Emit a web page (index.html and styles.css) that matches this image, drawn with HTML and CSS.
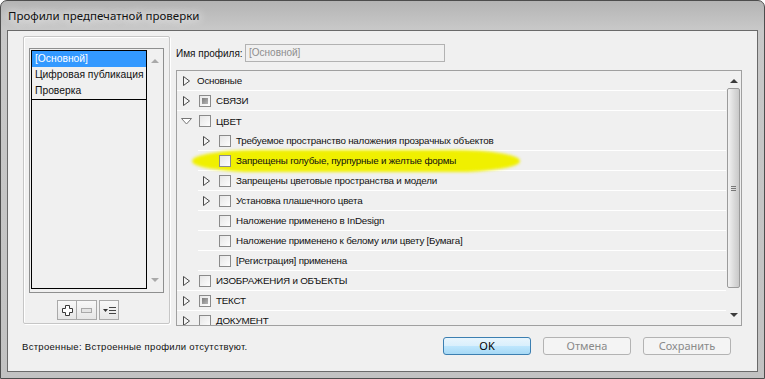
FILE: index.html
```html
<!DOCTYPE html>
<html>
  <head>
    <meta charset="utf-8" />
    <title>Профили предпечатной проверки</title>
    <link rel="stylesheet" href="styles.css">
  </head>
  <body>
    <div class="window">
      <div class="titlebar">
        <span class="title">Профили предпечатной проверки</span>
      </div>
      <div class="client">
        <div class="main">
          <!-- profiles list -->
          <div class="group">
            <div class="listbox">
              <div class="list">
                <div class="item selected">[Основной]</div>
                <div class="item">Цифровая публикация</div>
                <div class="item last">Проверка</div>
              </div>
              <div class="vscroll off">
                <span class="arrow up"></span>
                <span class="arrow down"></span>
              </div>
            </div>
            <div class="list-tools">
              <div class="seg">
                <button class="tool">
                  <svg width="11" height="11" viewBox="0 0 11 11">
                    <path d="M3.5 0.5h4v3h3v4h-3v3h-4v-3h-3v-4h3z" fill="#fff" stroke="#3a3a3a" />
                  </svg>
                </button>
                <button class="tool">
                  <svg width="11" height="11" viewBox="0 0 11 11">
                    <rect x="0.5" y="3.5" width="10" height="4" fill="#e4e4e4" stroke="#a8a8a8" />
                  </svg>
                </button>
              </div>
              <button class="tool">
                <svg width="13" height="11" viewBox="0 0 13 11">
                  <path d="M0 4h5l-2.5 3z" fill="#333" />
                  <path d="M6 2.5h7M6 5.5h7M6 8.5h7" stroke="#444" stroke-width="1" />
                </svg>
              </button>
            </div>
          </div>

          <!-- profile details -->
          <div class="right">
            <div class="name-row">
              <span class="name-label">Имя профиля:</span>
              <div class="name-input">[Основной]</div>
            </div>
            <div class="tree">
              <div class="rows">
                <div class="row">
                  <span class="tw"><svg width="7" height="10" viewBox="0 0 7 10"><path d="M0.5 0.5L6.5 5L0.5 9.5z" fill="#f4f4f4" stroke="#4a4a4a" /></svg></span>
                  <span class="text tight">Основные</span>
                </div>
                <div class="row">
                  <span class="tw"><svg width="7" height="10" viewBox="0 0 7 10"><path d="M0.5 0.5L6.5 5L0.5 9.5z" fill="#f4f4f4" stroke="#4a4a4a" /></svg></span>
                  <span class="check mixed"></span>
                  <span class="text">СВЯЗИ</span>
                </div>
                <div class="row open">
                  <span class="tw"><svg width="11" height="7" viewBox="0 0 11 7"><path d="M0.5 0.5L10.5 0.5L5.5 6z" fill="#fff" stroke="#777" /></svg></span>
                  <span class="check"></span>
                  <span class="text">ЦВЕТ</span>
                </div>
                <div class="row child">
                  <span class="tw"><svg width="7" height="10" viewBox="0 0 7 10"><path d="M0.5 0.5L6.5 5L0.5 9.5z" fill="#f4f4f4" stroke="#4a4a4a" /></svg></span>
                  <span class="check"></span>
                  <span class="text">Требуемое пространство наложения прозрачных объектов</span>
                </div>
                <div class="row child marked">
                  <span class="tw"></span>
                  <span class="check"></span>
                  <span class="text">Запрещены голубые, пурпурные и желтые формы</span>
                </div>
                <div class="row child">
                  <span class="tw"><svg width="7" height="10" viewBox="0 0 7 10"><path d="M0.5 0.5L6.5 5L0.5 9.5z" fill="#f4f4f4" stroke="#4a4a4a" /></svg></span>
                  <span class="check"></span>
                  <span class="text">Запрещены цветовые пространства и модели</span>
                </div>
                <div class="row child">
                  <span class="tw"><svg width="7" height="10" viewBox="0 0 7 10"><path d="M0.5 0.5L6.5 5L0.5 9.5z" fill="#f4f4f4" stroke="#4a4a4a" /></svg></span>
                  <span class="check"></span>
                  <span class="text">Установка плашечного цвета</span>
                </div>
                <div class="row child">
                  <span class="tw"></span>
                  <span class="check"></span>
                  <span class="text">Наложение применено в InDesign</span>
                </div>
                <div class="row child">
                  <span class="tw"></span>
                  <span class="check"></span>
                  <span class="text">Наложение применено к белому или цвету [Бумага]</span>
                </div>
                <div class="row child">
                  <span class="tw"></span>
                  <span class="check"></span>
                  <span class="text">[Регистрация] применена</span>
                </div>
                <div class="row">
                  <span class="tw"><svg width="7" height="10" viewBox="0 0 7 10"><path d="M0.5 0.5L6.5 5L0.5 9.5z" fill="#f4f4f4" stroke="#4a4a4a" /></svg></span>
                  <span class="check"></span>
                  <span class="text">ИЗОБРАЖЕНИЯ и ОБЪЕКТЫ</span>
                </div>
                <div class="row">
                  <span class="tw"><svg width="7" height="10" viewBox="0 0 7 10"><path d="M0.5 0.5L6.5 5L0.5 9.5z" fill="#f4f4f4" stroke="#4a4a4a" /></svg></span>
                  <span class="check mixed"></span>
                  <span class="text">ТЕКСТ</span>
                </div>
                <div class="row">
                  <span class="tw"><svg width="7" height="10" viewBox="0 0 7 10"><path d="M0.5 0.5L6.5 5L0.5 9.5z" fill="#f4f4f4" stroke="#4a4a4a" /></svg></span>
                  <span class="check"></span>
                  <span class="text">ДОКУМЕНТ</span>
                </div>
              </div>
              <div class="vscroll">
                <span class="arrow up"></span>
                <div class="track">
                  <div class="thumb"><span class="grip"></span></div>
                </div>
                <span class="arrow down"></span>
              </div>
            </div>
          </div>
        </div>

        <div class="footer">
          <div class="status">Встроенные: Встроенные профили отсутствуют.</div>
          <div class="buttons">
            <button class="btn default">OK</button>
            <button class="btn" disabled>Отмена</button>
            <button class="btn" disabled>Сохранить</button>
          </div>
        </div>
      </div>
    </div>
  </body>
</html>
```

FILE: styles.css
```css
html,
body {
  margin: 0;
  width: 765px;
  height: 379px;
  overflow: hidden;
  background: #fff;
  font-family: "Liberation Sans", Arial, sans-serif;
  font-size: 9.8px;
  color: #111;
}
*,
*:before,
*:after {
  box-sizing: border-box;
}
.window {
  height: 379px;
  display: flex;
  flex-direction: column;
  border: 1px solid #4d4d4d;
  border-radius: 7px 7px 0 0;
  padding: 0 6px 6px 6px;
  background: linear-gradient(to bottom, #b4b4b4 0, #c8c8c8 28px, #c2c2c2 100%);
}
.titlebar {
  height: 29px;
  display: flex;
  align-items: center;
  padding-left: 1px;
}
.title {
  font-family: "Noto Sans", sans-serif;
  font-size: 11.5px;
  color: #111;
  text-shadow: 0 0 8px #fff, 0 0 12px #fff;
}
.client {
  flex: 1;
  border: 1px solid #6a6a6a;
  background: #f0f0f0;
}
.main {
  display: flex;
  gap: 6px;
  padding: 5px 0 0 15px;
}

/* left group */
.group {
  width: 147px;
  height: 288px;
  border: 1px solid #c6c6c6;
  border-radius: 2px;
  box-shadow: inset 1px 1px #fff, 1px 1px #fff;
  padding: 11px 0 0 5px;
}
.listbox {
  width: 135px;
  height: 245px;
  display: flex;
  border: 1px solid #8e8f8f;
  background: #f0f0f0;
}
.list {
  width: 117px;
  margin: 1px 0 3px 1px;
  border: 1px solid #000;
}
.item {
  height: 16px;
  line-height: 16px;
  padding-left: 3px;
  font-size: 10.3px;
  white-space: nowrap;
}
.item.selected {
  background: #3399ff;
  color: #fff;
}
.item.last {
  border-bottom: 1px solid #000;
  height: 17px;
}
.vscroll {
  width: 16px;
  display: flex;
  flex-direction: column;
  align-items: center;
  justify-content: space-between;
}
.vscroll.off {
  padding: 10px 0 10px;
}
.arrow {
  width: 0;
  height: 0;
  border-left: 4px solid transparent;
  border-right: 4px solid transparent;
}
.arrow.up {
  border-bottom: 4px solid #3c3c3c;
}
.arrow.down {
  border-top: 4px solid #3c3c3c;
}
.vscroll.off .arrow.up {
  border-bottom-color: #a9a9a9;
}
.vscroll.off .arrow.down {
  border-top-color: #a9a9a9;
}
.list-tools {
  display: flex;
  gap: 2px;
  margin: 7px 0 0 28px;
}
.seg {
  display: flex;
}
.tool {
  width: 20px;
  height: 20px;
  padding: 0;
  display: flex;
  align-items: center;
  justify-content: center;
  border: 1px solid #a9a9a9;
  background: linear-gradient(to bottom, #f8f8f8, #e6e6e6);
}
.seg .tool + .tool {
  border-left: 0;
}

/* right side */
.right {
  width: 566px;
}
.name-row {
  display: flex;
  align-items: center;
  margin-top: 8px;
  height: 18px;
  white-space: nowrap;
}
.name-label {
  width: 69px;
  font-size: 10px;
}
.name-input {
  width: 200px;
  height: 18px;
  line-height: 16px;
  padding-left: 3px;
  font-size: 10px;
  border: 1px solid #b2b2b2;
  color: #8e8e8e;
}
.tree {
  margin-top: 8px;
  height: 256px;
  display: flex;
  border: 1px solid #a0a0a0;
  overflow: hidden;
}
.rows {
  flex: 1;
}
.row {
  position: relative;
  height: 20px;
  display: flex;
  align-items: center;
  padding-left: 4px;
  border-bottom: 1px solid #fff;
  white-space: nowrap;
  letter-spacing: -0.2px;
}
.row.open {
  border-bottom: 0;
}
.row.child {
  margin-left: 21px;
  padding-left: 3px;
}
.row > * {
  position: relative;
  z-index: 1;
}
.tw {
  width: 12px;
  height: 12px;
  display: flex;
  align-items: center;
  padding-left: 2px;
}
.row.open .tw {
  padding-left: 0;
}
.check {
  width: 12px;
  height: 12px;
  margin-left: 6px;
  border: 1px solid #8a8a8a;
  background: linear-gradient(135deg, #e6e6e6, #fdfdfd);
  display: flex;
  align-items: center;
  justify-content: center;
}
.check.mixed:after {
  content: "";
  width: 6px;
  height: 6px;
  background: linear-gradient(135deg, #7c7c7c, #b4b4b4);
}
.text {
  margin-left: 5px;
}
.text.tight {
  margin-left: 4px;
}
.row.marked:before {
  content: "";
  position: absolute;
  left: -6px;
  top: -1px;
  width: 328px;
  height: 22px;
  background: #f0f000;
  border-radius: 20% / 50%;
  filter: blur(1.5px);
  z-index: 0;
}
.tree .vscroll {
  width: 15px;
  justify-content: flex-start;
  padding: 8px 0 8px;
}
.track {
  flex: 1;
  width: 100%;
  padding: 5px 1px 0 1px;
}
.thumb {
  height: 200px;
  border: 1px solid #9b9b9b;
  border-radius: 2px;
  background: linear-gradient(to right, #f2f2f2, #d8d8d8 60%, #c9c9c9);
  display: flex;
  align-items: center;
  justify-content: center;
}
.grip {
  width: 5px;
  height: 5px;
  border-top: 1px solid #777;
  border-bottom: 1px solid #777;
  position: relative;
}
.grip:after {
  content: "";
  position: absolute;
  left: 0;
  right: 0;
  top: 1px;
  border-top: 1px solid #777;
}
.tree .arrow.down {
  margin-top: 9px;
}

/* footer */
.footer {
  display: flex;
  align-items: center;
  height: 18px;
  margin-top: 11px;
  padding: 0 26px 0 14px;
}
.status {
  font-size: 9.5px;
  letter-spacing: 0.3px;
}
.buttons {
  margin-left: auto;
  display: flex;
  gap: 12px;
}
.btn {
  width: 88px;
  height: 18px;
  padding: 0;
  font-family: "Noto Sans", sans-serif;
  font-size: 11px;
  line-height: 14px;
  color: #000;
  border: 1px solid #acacac;
  border-radius: 3px;
  background: linear-gradient(to bottom, #f6f6f6, #e9e9e9);
}
.btn.default {
  border-color: #3c7fb1;
  background: linear-gradient(to bottom, #e8f5fd 0, #d9effc 50%, #bee6fd 51%, #a7d9f5 100%);
}
.btn:disabled {
  color: #8a8a8a;
  border-color: #b3b3b3;
  background: #f4f4f4;
}
```
